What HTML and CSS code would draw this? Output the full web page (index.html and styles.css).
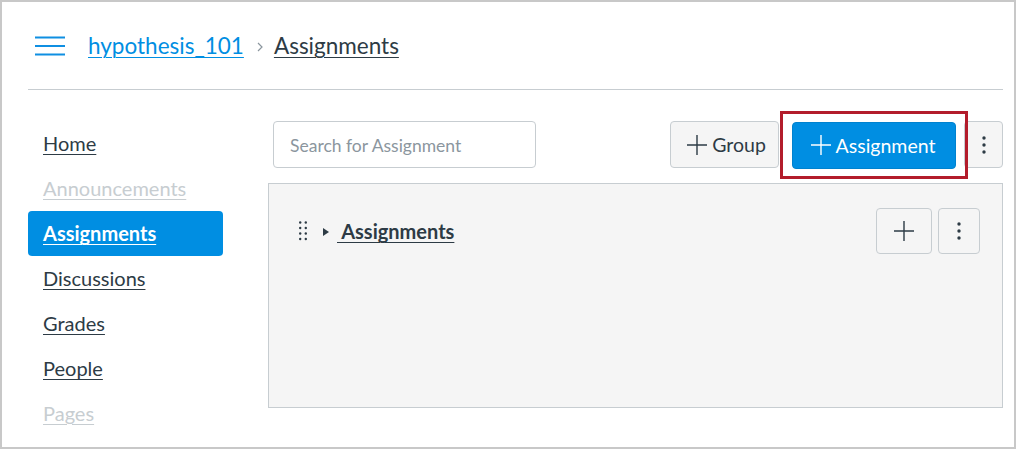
FILE: index.html
```html
<!DOCTYPE html>
<html>
<head>
<meta charset="utf-8">
<link rel="stylesheet" href="styles.css">
</head>
<body>
<div class="frame">
  <div class="page">
    <header class="header">
      <span class="burger"><svg width="30" height="20" viewBox="0 0 30 20"><path d="M0 1.5H30M0 10H30M0 18.5H30" stroke="#0f8fe2" stroke-width="2"/></svg></span>
      <a class="crumb-link">hypothesis_101</a>
      <span class="crumb-sep"><svg width="8" height="10" viewBox="0 0 8 10"><path d="M2 1L6 5L2 9" fill="none" stroke="#8b969e" stroke-width="1.2"/></svg></span>
      <a class="crumb-current">Assignments</a>
    </header>
    <div class="body">
      <nav class="sidebar">
        <a class="nav-item">Home</a>
        <a class="nav-item disabled">Announcements</a>
        <a class="nav-item active">Assignments</a>
        <a class="nav-item">Discussions</a>
        <a class="nav-item">Grades</a>
        <a class="nav-item">People</a>
        <a class="nav-item disabled">Pages</a>
      </nav>
      <main class="content">
        <div class="toolbar">
          <div class="search">Search for Assignment</div>
          <div class="actions">
            <button class="btn group"><svg class="plus" width="20" height="20" viewBox="0 0 20 20"><path d="M10 0V20M0 10H20" stroke="#2d3b45" stroke-width="1.4"/></svg>Group</button>
            <div class="highlight">
              <button class="btn primary"><svg class="plus" width="20" height="20" viewBox="0 0 20 20"><path d="M10 0V20M0 10H20" stroke="#fff" stroke-width="1.4"/></svg>Assignment</button>
            </div>
            <button class="btn kebab"><svg width="4" height="18" viewBox="0 0 4 18"><circle cx="2" cy="2" r="1.7" fill="#2d3b45"/><circle cx="2" cy="9" r="1.7" fill="#2d3b45"/><circle cx="2" cy="16" r="1.7" fill="#2d3b45"/></svg></button>
          </div>
        </div>
        <section class="panel">
          <div class="group-row">
            <svg class="drag" width="8" height="20" viewBox="0 0 8 20"><g fill="#2d3b45"><circle cx="1.2" cy="1.5" r="1.2"/><circle cx="6.8" cy="1.5" r="1.2"/><circle cx="1.2" cy="7" r="1.2"/><circle cx="6.8" cy="7" r="1.2"/><circle cx="1.2" cy="12.5" r="1.2"/><circle cx="6.8" cy="12.5" r="1.2"/><circle cx="1.2" cy="18" r="1.2"/><circle cx="6.8" cy="18" r="1.2"/></g></svg>
            <svg class="caret" width="6" height="8" viewBox="0 0 6 8"><path d="M0 0L6 4L0 8Z" fill="#2d3b45"/></svg>
            <a class="group-title">&nbsp;Assignments</a>
            <div class="group-actions">
              <button class="btn small plusbtn"><svg width="20" height="20" viewBox="0 0 20 20"><path d="M10 0V20M0 10H20" stroke="#2d3b45" stroke-width="1.4"/></svg></button>
              <button class="btn small kebab-sm"><svg width="4" height="18" viewBox="0 0 4 18"><circle cx="2" cy="2" r="1.7" fill="#2d3b45"/><circle cx="2" cy="9" r="1.7" fill="#2d3b45"/><circle cx="2" cy="16" r="1.7" fill="#2d3b45"/></svg></button>
            </div>
          </div>
        </section>
      </main>
    </div>
  </div>
</div>
</body>
</html>
```

FILE: styles.css
```css
* { box-sizing: border-box; }
html, body { margin: 0; padding: 0; background: #fff; }
body { font-family: Lato, "Open Sans", sans-serif; color: #2d3b45; }

.frame {
  width: 1016px;
  height: 449px;
  border: 2px solid #c8c8c8;
  background: #fff;
  overflow: hidden;
}

.page {
  margin-left: 26px;
  width: 975px;
}

.header {
  height: 88px;
  border-bottom: 1px solid #c7cdd1;
  display: flex;
  align-items: center;
  padding-left: 7px;
}
.burger { display: flex; width: 30px; height: 20px; margin-right: 23px; margin-top: 1px; }
.crumb-link {
  font-size: 22.5px;
  color: #008ee2;
  text-decoration: underline;
  text-underline-offset: 3px;
  text-decoration-thickness: 1px;
}
.crumb-sep { display: flex; margin: 2px 10px 0 12px; }
.crumb-current {
  font-size: 22.5px;
  color: #2d3b45;
  text-decoration: underline;
  text-underline-offset: 3px;
  text-decoration-thickness: 1px;
}

.body { display: flex; }

.sidebar {
  width: 195px;
  padding-top: 31px;
  display: flex;
  flex-direction: column;
}
.nav-item {
  height: 45px;
  line-height: 45px;
  padding-left: 15px;
  font-size: 20px;
  color: #2d3b45;
  text-decoration: underline;
  text-underline-offset: 3px;
  text-decoration-thickness: 1px;
  border-radius: 4px;
}
.nav-item.disabled { color: #c7cdd1; }
.nav-item.active {
  background: #008ee2;
  color: #fff;
  font-weight: bold;
}

.content {
  margin-left: 45px;
  width: 735px;
  padding-top: 31px;
}

.toolbar {
  display: flex;
  align-items: center;
  justify-content: space-between;
  padding-left: 5px;
  height: 47px;
}
.search {
  width: 263px;
  height: 47px;
  border: 1px solid #c7cdd1;
  border-radius: 4px;
  padding: 2px 0 0 16px;
  line-height: 43px;
  font-size: 17.5px;
  color: #8b969e;
}
.actions { display: flex; align-items: center; }

.btn {
  font-family: Lato, "Open Sans", sans-serif;
  height: 47px;
  border: 1px solid #c7cdd1;
  border-radius: 4px;
  background: #f5f5f5;
  color: #2d3b45;
  font-size: 19.5px;
  display: flex;
  align-items: center;
  justify-content: center;
  padding: 0;
  cursor: pointer;
}
.plus { margin-right: 5px; }
.btn.group { width: 109px; padding-left: 4px; }
.highlight {
  border: 3px solid #b31c2b;
  padding: 8px 9px 7px 9px;
  margin: 0 -4px 0 1px;
  position: relative;
  z-index: 1;
}
.btn.primary {
  background: #008ee2;
  border-color: #0082cf;
  color: #fff;
  width: 164px;
  padding: 0 2px 0 0;
}
.btn.kebab { width: 39px; }

.panel {
  margin-top: 15px;
  height: 225px;
  background: #f5f5f5;
  border: 1px solid #c7cdd1;
}
.group-row {
  display: flex;
  align-items: center;
  padding: 24px 22px 0 30px;
}
.drag { margin-right: 16px; }
.caret { margin-right: 8px; margin-top: 1px; }
.group-title {
  font-size: 20px;
  font-weight: bold;
  color: #2d3b45;
  text-decoration: underline;
  text-underline-offset: 3px;
  text-decoration-thickness: 1px;
}
.group-actions { margin-left: auto; display: flex; gap: 6px; }
.btn.small { height: 46px; }
.plusbtn { width: 56px; }
.kebab-sm { width: 42px; }
```
